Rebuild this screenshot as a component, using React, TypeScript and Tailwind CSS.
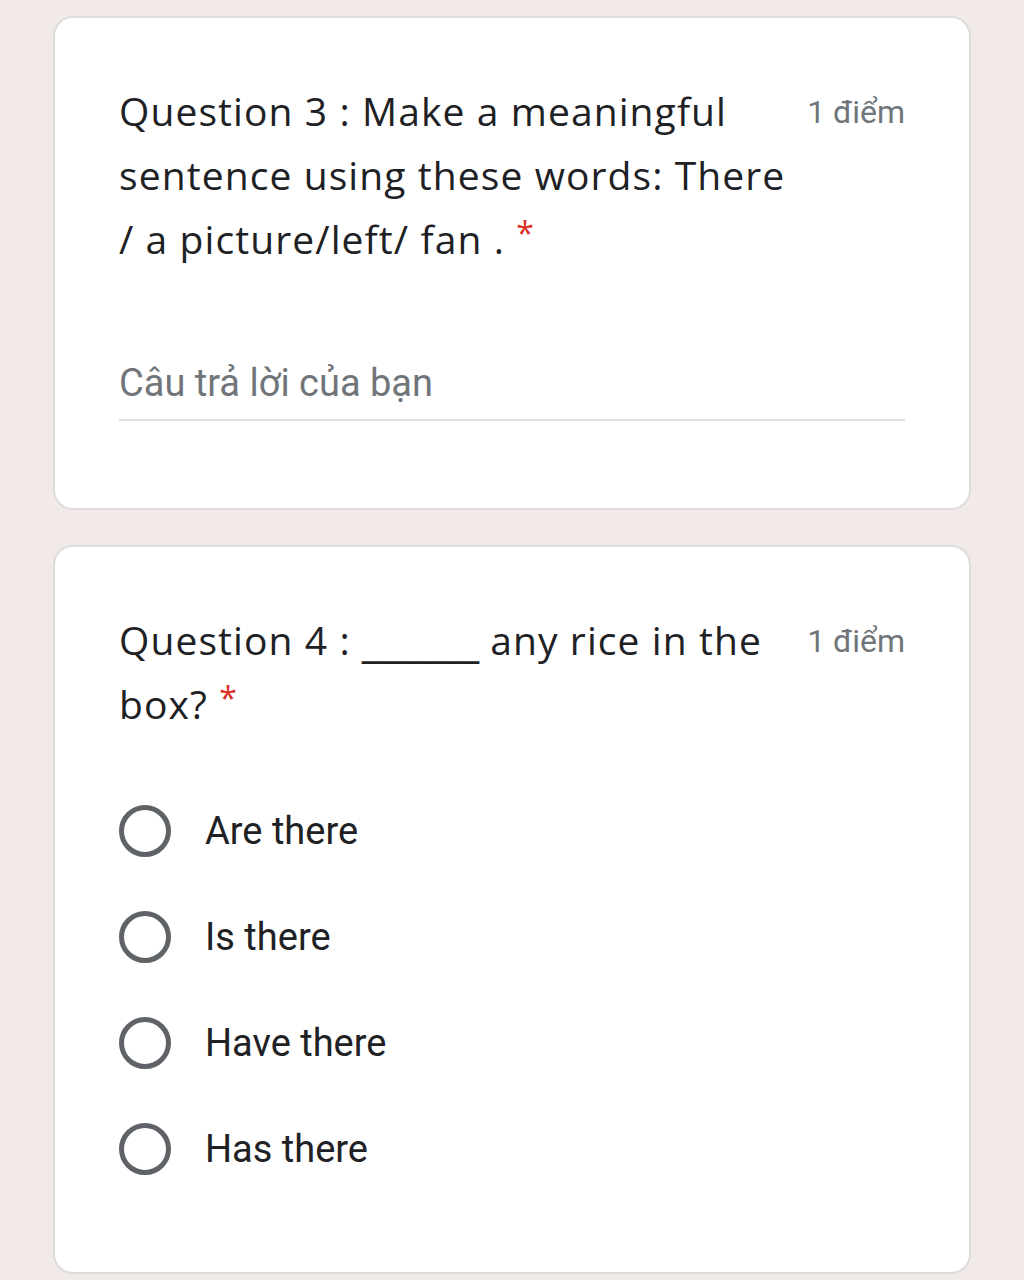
import React from "react";

const titleFont = { fontFamily: '"Open Sans", "Noto Sans", sans-serif' };

function Radio({ label }: { label: string }) {
  return (
    <div className="flex items-center h-[106px]">
      <div className="w-[52px] h-[52px] rounded-full border-[5px] border-[#5f6368] shrink-0" />
      <span className="ml-[34px] text-[38px] text-[#202124] font-['Roboto',sans-serif]">{label}</span>
    </div>
  );
}

function Points() {
  return (
    <div className="text-[32px] text-[#70757a] font-['Roboto',sans-serif] leading-[40px] mt-[-2px] whitespace-nowrap">
      1 điểm
    </div>
  );
}

function Star() {
  return <span className="text-[#d93025] text-[32px] leading-none align-[9px]">*</span>;
}

export default function App() {
  return (
    <div className="min-h-[1280px] bg-[#f1eae9] pt-[16px] px-[53px] flex flex-col gap-[35px]">
      <div className="bg-white rounded-[20px] border-2 border-[#dedcdc] h-[494px] px-[64px] pt-[76px]">
        <div className="flex justify-between items-start">
          <div className="w-[680px] text-[39px] tracking-[0.028em] leading-[64px] text-[#202124] -mt-[15px]" style={titleFont}>
            Question 3 : Make a meaningful sentence using these words: There / a picture/left/ fan . <Star />
          </div>
          <Points />
        </div>
        <div className="mt-[84px] border-b-2 border-[#e0e0e0] pb-[7px]">
          <span className="text-[38px] text-[#70757a] font-['Roboto',sans-serif]">Câu trả lời của bạn</span>
        </div>
      </div>
      <div className="bg-white rounded-[20px] border-2 border-[#dedcdc] h-[729px] px-[64px] pt-[76px]">
        <div className="flex justify-between items-start">
          <div className="w-[680px] text-[39px] tracking-[0.028em] leading-[64px] text-[#202124] -mt-[15px]" style={titleFont}>
            Question 4 :{" "}
            <span className="tracking-normal leading-none font-['DejaVu_Sans',sans-serif]">______</span> any rice in the box? <Star />
          </div>
          <Points />
        </div>
        <div className="mt-[42px] flex flex-col">
          <Radio label="Are there" />
          <Radio label="Is there" />
          <Radio label="Have there" />
          <Radio label="Has there" />
        </div>
      </div>
    </div>
  );
}
